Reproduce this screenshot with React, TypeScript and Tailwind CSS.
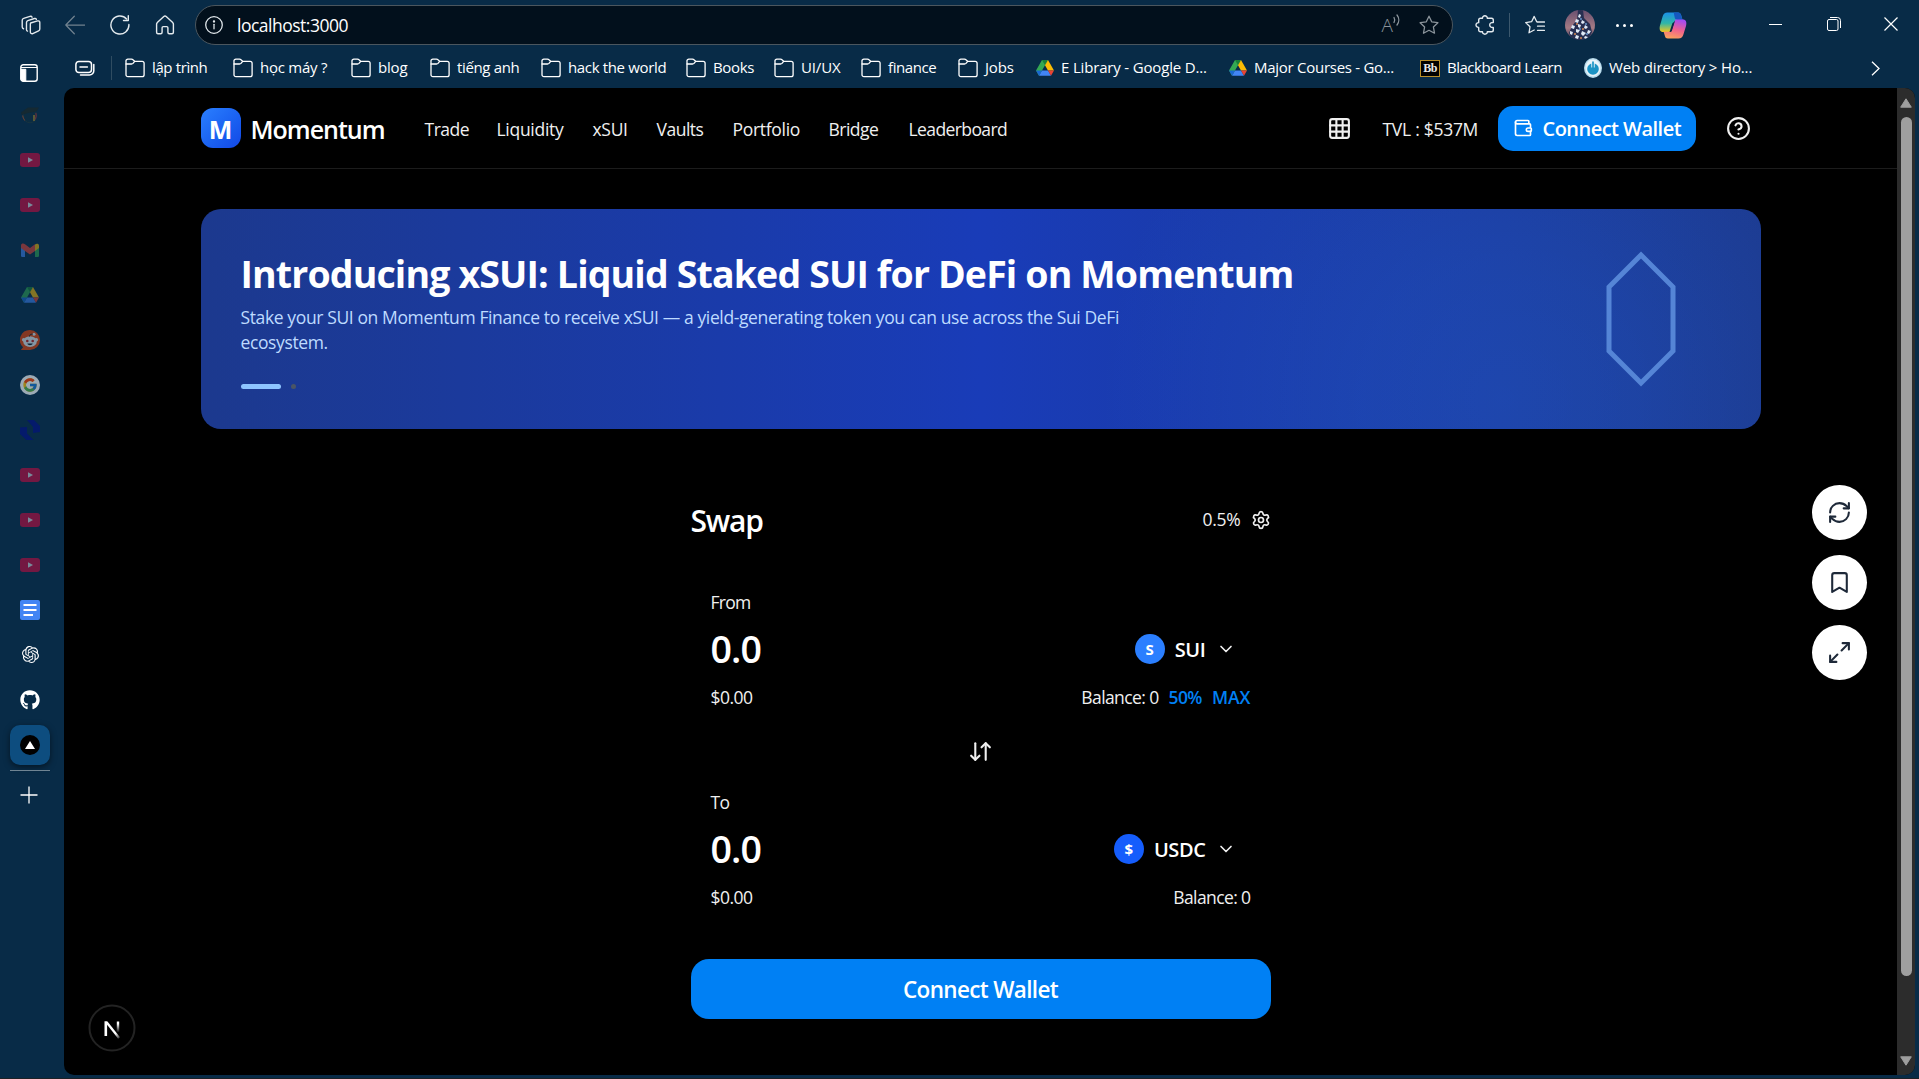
import type { ReactNode } from "react";
import {
  ArrowDownUp,
  Bookmark,
  ChevronDown,
  CircleHelp,
  Grid3x3,
  Maximize2,
  RefreshCw,
  Settings,
  Wallet,
} from "lucide-react";
import { FcGoogle } from "react-icons/fc";
import { FaGithub } from "react-icons/fa";
import { SiOpenai } from "react-icons/si";

/* ---------- browser chrome icons ---------- */

function Icon({ children, className = "size-5", sw = 1.25 }: { children: ReactNode; className?: string; sw?: number }) {
  return (
    <svg
      viewBox="0 0 20 20"
      className={`${className} shrink-0`}
      fill="none"
      stroke="currentColor"
      strokeWidth={sw}
      strokeLinecap="round"
      strokeLinejoin="round"
    >
      {children}
    </svg>
  );
}

const WorkspacesIcon = () => (
  <Icon className="size-[22px]">
    <path d="M9.6 8.2 16 6.3c1-.3 2 .4 2 1.5v5.9c0 .7-.4 1.3-1.100 1.6l-5.300 2.500c-1 .5-2.200-.2-2.200-1.400V9.700c0-.7.1-1.300.2-1.500Z" />
    <path d="M6.800 15.600c-.6-.2-.9-.7-.9-1.300V7.700c0-.8.5-1.400 1.200-1.700l6-1.900c.8-.2 1.500.1 1.800.8" />
    <path d="M3.200 13.400c-.7-.2-1.200-.8-1.200-1.500V5.700c0-.8.5-1.500 1.300-1.700l5.800-1.900c.8-.2 1.600.1 1.900.8" />
  </Icon>
);

const BackIcon = () => (
  <Icon>
    <path d="M19.500 10H.8M9.300 1.200.8 10l8.500 8.800" />
  </Icon>
);

const ReloadIcon = () => (
  <Icon sw={1.4}>
    <path d="M18.900 9.500A9 9 0 1 1 16.600 4" />
    <path d="M18.300.8v4.700h-4.800" />
  </Icon>
);

const HomeIcon = () => (
  <Icon sw={1.4}>
    <path d="M8.800 1.600a1.800 1.800 0 0 1 2.400 0l6.500 6c.5.4.7 1 .7 1.500v8.200c0 .8-.6 1.500-1.400 1.500h-2.700c-.8 0-1.400-.7-1.400-1.500v-4.500c0-.7-.5-1.200-1.200-1.200H8.300c-.7 0-1.200.5-1.200 1.200v4.500c0 .8-.6 1.500-1.400 1.500H3c-.8 0-1.400-.7-1.400-1.500V9.100c0-.6.2-1.100.7-1.500l6.500-6Z" />
  </Icon>
);

const InfoIcon = () => (
  <Icon className="size-[18px]" sw={1.4}>
    <circle cx="10" cy="10" r="9.200" />
    <path d="M10 9.200v5" />
    <circle cx="10" cy="6" r=".6" fill="currentColor" />
  </Icon>
);

const StarIcon = () => (
  <Icon sw={1.3}>
    <path d="m10 1.200 2.700 5.600 6.200.9-4.500 4.300 1.100 6.200-5.500-2.900-5.500 2.900 1.100-6.200L1.100 7.700l6.200-.9L10 1.200Z" />
  </Icon>
);

const FavoritesIcon = () => (
  <Icon sw={1.3}>
    <path d="M12 6.800h-.3L9.200 1.400 6.600 6.700l-5.900.9L5 11.800l-1 6 5.200-2.800" />
    <path d="M12.500 7h7M12.500 11.200h7M12.500 15.400h7" />
  </Icon>
);

const PuzzleIcon = () => (
  <Icon sw={1.4}>
    <path d="M5.500 3.200h2c-.1-1.500 1-2.400 2.400-2.400s2.500.9 2.400 2.400h4.200c1 0 1.800.8 1.800 1.800v2.500c-2-.3-3.600.9-3.600 2.500s1.600 2.800 3.600 2.500V15c0 1-.8 1.800-1.800 1.800h-4.200c.1 1.500-1 2.400-2.400 2.400s-2.500-.9-2.400-2.400h-2c-1 0-1.800-.8-1.800-1.800v-2.600C2.200 12.500 1 11.400 1 10s1.200-2.500 2.700-2.400V5c0-1 .8-1.800 1.800-1.800Z" />
  </Icon>
);

const FolderIcon = () => (
  <Icon sw={1.3}>
    <path d="M.9 3.200c0-1.200.9-2 2-2h3.600c.6 0 1.100.2 1.500.6L9.600 3.300h7.500c1.200 0 2 .9 2 2v11.400c0 1.200-.9 2-2 2H3c-1.200 0-2-.9-2-2V3.200Z" />
    <path d="M1 6h5.500c.6 0 1.100-.2 1.500-.6l1.700-2" />
  </Icon>
);

const TabStackIcon = () => (
  <Icon sw={1.5}>
    <rect x=".9" y="3.500" width="15.600" height="11" rx="3" />
    <path d="M5 9h7.400M18.800 6.500v6.200a4.300 4.300 0 0 1-4.300 4.300H5.500" />
  </Icon>
);

const SidebarIcon = () => (
  <svg viewBox="0 0 18 18" className="size-[18px]">
    <rect x=".8" y=".8" width="16.400" height="16.400" rx="2.500" fill="none" stroke="#fff" strokeWidth="1.400" />
    <path d="M1 3.500h16M1 5.300h4.800V17H3a2 2 0 0 1-2-2Z" fill="#fff" stroke="#fff" />
  </svg>
);

const ReadAloudIcon = () => (
  <span className="flex items-start text-[#8b949b]">
    <span className="text-[19px] leading-5 font-light">A</span>
    <svg viewBox="0 0 8 12" className="mt-[-1px] h-3 w-2" fill="none" stroke="currentColor" strokeWidth="1.300" strokeLinecap="round">
      <path d="M1 3.500a5 5 0 0 1 0 5M4 1a8 8 0 0 1 0 10" />
    </svg>
  </span>
);

const Avatar = () => (
  <svg viewBox="0 0 30 30" className="size-[30px]">
    <defs>
      <clipPath id="avatar">
        <circle cx="15" cy="15" r="15" />
      </clipPath>
      <linearGradient id="avatarBg" x1="0" y1="0" x2="0" y2="1">
        <stop offset="0" stopColor="#6a5070" />
        <stop offset=".6" stopColor="#a57b84" />
        <stop offset="1" stopColor="#3d3553" />
      </linearGradient>
    </defs>
    <g clipPath="url(#avatar)">
      <rect width="30" height="30" fill="url(#avatarBg)" />
      <path d="M13 0h5l1 8 6 6 2 8-4 8H7l-3-7 3-7 5-6Z" fill="#272f52" />
      <g fill="#dfe9f5">
        <path d="m14 4 2 1-1 3-2-1ZM11 9l3 1-1 3-3-1ZM17 10l3 2-2 2-2-1ZM7 15l3 1-1 3-3-1ZM13 14l3 1-1 3-2-1ZM20 15l3 2-2 2-2-1Z" />
        <path d="m5 21 3 1-1 3-2-1ZM11 19l4 1-2 3-2-1ZM17 21l4 2-3 3-2-2ZM23 20l3 1-2 3-2-1ZM11 25l3 1-1 3-3-1ZM20 26l3 1-2 2-2-1Z" />
      </g>
      <g fill="#d98a55">
        <circle cx="12" cy="14" r="1" /><circle cx="18" cy="19" r="1" /><circle cx="10" cy="24" r="1" /><circle cx="16" cy="28" r="1" />
      </g>
      <g fill="#6fa3dc">
        <circle cx="16" cy="9" r=".9" /><circle cx="21" cy="14" r=".9" /><circle cx="15" cy="19" r=".9" /><circle cx="22" cy="24" r=".9" />
      </g>
    </g>
  </svg>
);

const CopilotIcon = () => (
  <svg viewBox="0 0 28 27" className="h-[27px] w-7">
    <defs>
      <linearGradient id="cpA" x1="0" y1="0" x2="0" y2="1">
        <stop offset="0" stopColor="#1b8fe6" />
        <stop offset=".55" stopColor="#2fb6a8" />
        <stop offset="1" stopColor="#f2c81d" />
      </linearGradient>
      <linearGradient id="cpB" x1=".6" y1="0" x2=".3" y2="1">
        <stop offset="0" stopColor="#a44bf0" />
        <stop offset=".5" stopColor="#f0618e" />
        <stop offset="1" stopColor="#fca35b" />
      </linearGradient>
    </defs>
    <path d="M16 .5h3.200c1.600 0 2.400 1 2.800 2.300l1.600 5.200h-5.400c-2 0-3 1-3.500 2.700L11.500 20H4.200C1 20 0 17.300 1 13.500L3.600 4.400C4.400 1.700 5.800.5 8.500.5Z" fill="url(#cpA)" />
    <path d="M14.700.5H19c1.700 0 2.600 1 3 2.300l1.500 5.200h-4.800c-1.700 0-2.500-.8-2.900-2Z" fill="#1557c0" />
    <path d="M12 26.500H8.800c-1.600 0-2.400-1-2.800-2.300L4.600 19.800h5c2 0 3-1 3.500-2.700L16.400 7.500h7.400c3.200 0 4.200 2.700 3.200 6.500l-2.600 8.600c-.8 2.700-2.200 3.900-4.900 3.900Z" fill="url(#cpB)" />
    <path d="M15.500 10.200 13.600 16.500l-.7 2.300c-.3.800-.8 1.200-1.500 1.200h-.9l2.700-8.300c.4-1 1-1.500 2.300-1.500Z" fill="#082b47" />
  </svg>
);

/* ---------- site icons ---------- */

const DriveIcon = () => (
  <svg viewBox="0 0 18 16" className="h-4 w-[18px] shrink-0">
    <path d="M6 0h6L6 10.400 3 15.800 0 10.600Z" fill="#34a853" />
    <path d="M6 0h6L9 5.200Z" fill="#188038" />
    <path d="M12 0l6 10.600h-6L9 5.200Z" fill="#fbbc04" />
    <path d="M6 10.600h6L15 15.800H3Z" fill="#4285f4" />
    <path d="M0 10.600h6L3 15.800Z" fill="#1967d2" />
    <path d="M12 10.600h6L15 15.800Z" fill="#ea4335" />
  </svg>
);

const YoutubeIcon = () => (
  <svg viewBox="0 0 20 14" className="h-[14px] w-5 opacity-45">
    <rect width="20" height="14" rx="3" fill="#f5033d" />
    <path d="M8 4.200v5.600L13 7Z" fill="#fff" />
  </svg>
);

const GmailIcon = () => (
  <svg viewBox="0 0 18 14" className="h-[14px] w-[18px] opacity-50">
    <path d="M0 3h4v11H1.200A1.200 1.200 0 0 1 0 12.800Z" fill="#4285f4" />
    <path d="M14 3h4v9.800a1.200 1.200 0 0 1-1.200 1.200H14Z" fill="#34a853" />
    <path d="M14 1.500C15.500 0 18 .5 18 2.500V5l-4 3Z" fill="#fbbc04" />
    <path d="M0 5V2.500C0 .5 2.500 0 4 1.300L9 5l5-3.700V8L9 11.500 4 8Z" fill="#ea4335" />
  </svg>
);

const RedditIcon = () => (
  <svg viewBox="0 0 20 20" className="size-5 opacity-50">
    <path d="M10 0a10 10 0 1 1 0 20H.8l2.300-2.700A10 10 0 0 1 10 0Z" fill="#ff4500" />
    <circle cx="3.700" cy="9.800" r="1.800" fill="#fff" />
    <circle cx="16.300" cy="9.800" r="1.800" fill="#fff" />
    <ellipse cx="10" cy="11.600" rx="6.800" ry="5.300" fill="#fff" />
    <circle cx="14" cy="4.300" r="1.500" fill="#fff" />
    <path d="M9.500 6.500c0-1.600 1-2.500 3.200-2.300" stroke="#222" fill="none" />
    <circle cx="7.300" cy="11" r="1.300" fill="#d6231a" />
    <circle cx="12.700" cy="11" r="1.300" fill="#d6231a" />
    <path d="M7.300 13.500h5.400c-.4 2.200-5 2.200-5.400 0Z" fill="#142029" />
  </svg>
);

const GoogleIcon = () => (
  <span className="flex size-5 items-center justify-center rounded-full bg-white opacity-60">
    <FcGoogle className="size-4" />
  </span>
);

const SwirlIcon = () => (
  <svg viewBox="0 0 20 20" className="size-5" fill="#041a6b">
    <path d="M7 0H14l6 6v6l-7 1V7Z" />
    <path d="M13.500 20H6.500L0 14V7.500L7 7v6.500Z" />
  </svg>
);

const GradIcon = () => (
  <svg viewBox="0 0 20 18" className="h-[18px] w-5">
    <circle cx="10" cy="10" r="6.800" fill="#0b2c42" stroke="#173340" />
    <path d="M1 6.500 8 1.500h11l-2.500 4-8.500 1.500-6.500 2Z" fill="#152932" />
    <path d="M2.600 9.500c.3 2 1 3.500 2.200 5" stroke="#5e4038" strokeWidth="1.200" fill="none" />
    <path d="M14 9v6" stroke="#7a6d33" strokeWidth="1.400" />
    <path d="M15.800 7c.8 2.200.6 4.500-.6 6.500" stroke="#5f2f3e" strokeWidth="1.300" fill="none" />
  </svg>
);

const DocsIcon = () => (
  <svg viewBox="0 0 20 20" className="size-5">
    <rect width="20" height="20" rx="2" fill="#4285f4" />
    <path d="M3.500 5h13M3.500 10h13M3.500 15h9.500" stroke="#fff" strokeWidth="2.200" />
  </svg>
);

const BlackboardIcon = () => (
  <span className="flex h-[17px] w-5 shrink-0 items-center justify-center border border-[#b98f2a] bg-black font-['Liberation_Serif',serif] text-[12px] leading-none font-bold text-[#e8e8e8]">
    Bb
  </span>
);

const WebDirIcon = () => (
  <svg viewBox="0 0 18 20" className="h-5 w-[18px] shrink-0">
    <ellipse cx="9" cy="10" rx="9" ry="10" fill="#b9dcec" />
    <ellipse cx="9" cy="10" rx="7.600" ry="8.500" fill="#e8f4fa" />
    <circle cx="9" cy="11" r="5.800" fill="#1b93c4" />
    <path d="M9 2.500v7" stroke="#e8f4fa" strokeWidth="3.400" />
    <path d="M9 3.500V11" stroke="#1b93c4" strokeWidth="1.700" />
  </svg>
);

/* ---------- browser chrome ---------- */

function Toolbar() {
  return (
    <div className="flex h-[50px] items-center text-[#e4eaee]">
      <div className="flex w-[61px] justify-center"><WorkspacesIcon /></div>
      <div className="flex w-7 justify-center text-[#71828f]"><BackIcon /></div>
      <div className="ml-[21px] flex w-5"><ReloadIcon /></div>
      <div className="ml-[25px] flex w-5"><HomeIcon /></div>
      <div className="ml-[20px] flex h-10 w-[1258px] items-center rounded-full border border-[#4b565e] bg-[#02101c] pr-[13px] pl-[9px]">
        <InfoIcon />
        <span className="ml-[14px] text-[17.5px] tracking-[-0.5px] text-white">localhost:3000</span>
        <div className="ml-auto flex items-center gap-[18px] text-[#8b949b]">
          <ReadAloudIcon />
          <StarIcon />
        </div>
      </div>
      <div className="ml-[22px] flex w-5"><PuzzleIcon /></div>
      <div className="ml-[14px] h-6 w-px bg-[#3c586d]" />
      <div className="ml-[15px] flex w-5"><FavoritesIcon /></div>
      <div className="ml-[20px] flex w-[30px]"><Avatar /></div>
      <div className="ml-[21px] flex w-[17px] justify-between">
        <span className="size-[3px] rounded-full bg-white" />
        <span className="size-[3px] rounded-full bg-white" />
        <span className="size-[3px] rounded-full bg-white" />
      </div>
      <div className="ml-[26px] flex w-7"><CopilotIcon /></div>
      <div className="ml-[82px] h-px w-[13px] -translate-y-px bg-white" />
      <div className="ml-[45px] flex -translate-y-px">
        <svg viewBox="0 0 14 14" className="size-[14px]" fill="none" stroke="#fff">
          <rect x=".5" y="2.500" width="10.500" height="11" rx="1.500" />
          <path d="M3 .5h7.500a3 3 0 0 1 3 3V11" />
        </svg>
      </div>
      <div className="ml-[43px] flex -translate-y-px">
        <svg viewBox="0 0 14 14" className="size-[14px]" stroke="#fff" strokeWidth="1.200">
          <path d="m.5.5 13 13M13.500.5l-13 13" />
        </svg>
      </div>
    </div>
  );
}

function Mark({ icon, text, className }: { icon: ReactNode; text: string; className: string }) {
  return (
    <div className={`flex shrink-0 items-center gap-[7px] whitespace-nowrap ${className}`}>
      {icon}
      <span className="pb-[2px]">{text}</span>
    </div>
  );
}

function Bookmarks() {
  return (
    <div className="flex h-[38px] items-center pb-[2px] text-[15px] text-white">
      <div className="flex w-[64px] items-center pt-[10px] pl-5"><SidebarIcon /></div>
      <div className="ml-[11px] flex w-9 pb-px"><TabStackIcon /></div>
      <div className="mr-[13px] h-6 w-px bg-[#2f4c61]" />
      <Mark icon={<FolderIcon />} text="lập trình" className="w-[108px] tracking-[-0.38px]" />
      <Mark icon={<FolderIcon />} text="học máy ?" className="w-[118px] tracking-[-0.25px]" />
      <Mark icon={<FolderIcon />} text="blog" className="w-[79px] tracking-[-0.2px]" />
      <Mark icon={<FolderIcon />} text="tiếng anh" className="w-[111px] tracking-[-0.35px]" />
      <Mark icon={<FolderIcon />} text="hack the world" className="w-[145px] tracking-[-0.35px]" />
      <Mark icon={<FolderIcon />} text="Books" className="w-[88px] tracking-[-0.35px]" />
      <Mark icon={<FolderIcon />} text="UI/UX" className="w-[87px] tracking-[-0.15px]" />
      <Mark icon={<FolderIcon />} text="finance" className="w-[97px] tracking-[-0.4px]" />
      <Mark icon={<FolderIcon />} text="Jobs" className="w-[78px] tracking-[-0.2px]" />
      <Mark icon={<DriveIcon />} text="E Library - Google D..." className="w-[193px] tracking-[-0.17px]" />
      <Mark icon={<DriveIcon />} text="Major Courses - Go..." className="w-[191px] tracking-[-0.27px]" />
      <Mark icon={<BlackboardIcon />} text="Blackboard Learn" className="w-[164px] tracking-[-0.48px]" />
      <Mark icon={<WebDirIcon />} text="Web directory > Ho..." className="w-[287px] tracking-[-0.15px]" />
      <svg viewBox="0 0 9 15" className="h-[15px] w-[9px]" fill="none" stroke="#fff" strokeWidth="1.300">
        <path d="m1 .8 7 6.700-7 6.700" />
      </svg>
    </div>
  );
}

const TABS: ReactNode[] = [
  <GradIcon />,
  <YoutubeIcon />,
  <YoutubeIcon />,
  <GmailIcon />,
  <span className="opacity-50"><DriveIcon /></span>,
  <RedditIcon />,
  <GoogleIcon />,
  <SwirlIcon />,
  <YoutubeIcon />,
  <YoutubeIcon />,
  <YoutubeIcon />,
  <DocsIcon />,
  <SiOpenai className="size-[17px] text-white" />,
  <FaGithub className="size-5 text-white" />,
];

function TabRail() {
  return (
    <div className="flex w-[60px] shrink-0 flex-col items-center pt-1">
      {TABS.map((icon, i) => (
        <div key={i} className="flex h-[45px] items-center justify-center">{icon}</div>
      ))}
      <div className="mt-[3px] flex size-10 items-center justify-center rounded-[10px] bg-[#0d4d7f] shadow-[0_2px_6px_rgba(0,0,0,0.5)]">
        <span className="flex size-5 items-center justify-center rounded-full bg-black">
          <svg viewBox="0 0 10 8" className="h-2 w-[10px]"><path d="M5 0l5 8H0Z" fill="#fff" /></svg>
        </span>
      </div>
      <div className="mt-[5px] h-px w-10 bg-[#6f8493]" />
      <svg viewBox="0 0 18 18" className="mt-[15px] mr-[2px] size-[18px]" stroke="#fff" strokeWidth="1.300">
        <path d="M9 .5v17M.5 9h17" />
      </svg>
    </div>
  );
}

/* ---------- page ---------- */

function Header() {
  return (
    <header className="h-[81px] border-b border-[#1c1c1c]">
      <div className="mx-auto flex h-full w-[1560px] items-center">
        <div className="flex size-10 items-center justify-center rounded-[12px] bg-linear-to-br from-[#2b7fff] to-[#1447e6]">
          <span className="pt-[2px] text-[25px] leading-none font-bold text-white">M</span>
        </div>
        <span className="ml-[10px] w-[174px] pt-[4px] text-[25px] font-semibold tracking-[-1px] text-white">Momentum</span>
        <nav className="flex pt-[3px] text-[17.5px] tracking-[-0.5px] text-[#f0f0f0]">
          <a className="w-[72px]">Trade</a>
          <a className="w-[96px] tracking-[-0.28px]">Liquidity</a>
          <a className="w-[64px] tracking-[-0.3px]">xSUI</a>
          <a className="w-[76px]">Vaults</a>
          <a className="w-[96px] tracking-[-0.3px]">Portfolio</a>
          <a className="w-[80px]">Bridge</a>
          <a className="tracking-[-0.6px]">Leaderboard</a>
        </nav>
        <div className="ml-auto flex items-center">
          <Grid3x3 className="size-[25px] text-[#f0f0f0]" />
          <span className="ml-[31px] w-[115px] pt-[3px] text-[17.5px] tracking-[-0.28px] text-[#f0f0f0]">TVL : $537M</span>
          <button className="flex h-[45px] w-[198px] items-center rounded-[15px] bg-[#0080f4] pl-[15px] text-white">
            <Wallet className="size-5" />
            <span className="ml-[10px] pt-px text-[20px] font-semibold tracking-[-0.53px]">Connect Wallet</span>
          </button>
          <CircleHelp className="mr-[10px] ml-[30px] size-[25px] text-[#f0f0f0]" />
        </div>
      </div>
    </header>
  );
}

function Banner() {
  return (
    <section className="flex h-[220px] w-[1560px] justify-between rounded-[20px] bg-[radial-gradient(circle_400px_at_1300px_190px,rgba(43,127,255,0.18),rgba(43,127,255,0.14)_35%,rgba(43,127,255,0)),linear-gradient(90deg,#1c398e,#193cb8_50%,#1c398e)] px-10 pt-10">
      <div>
        <h1 className="text-[37.5px] leading-[50px] font-bold tracking-[-0.86px] text-white">
          Introducing xSUI: Liquid Staked SUI for DeFi on Momentum
        </h1>
        <p className="mt-[6px] w-[900px] text-[17.5px] leading-[25px] tracking-[-0.38px] text-[#bedbff]">
          Stake your SUI on Momentum Finance to receive xSUI — a yield-generating token you can use across the Sui DeFi
          <br />
          ecosystem.
        </p>
        <div className="mt-[29px] flex gap-[10px]">
          <div className="h-[5px] w-10 rounded-full bg-[#8ec5ff]" />
          <div className="size-[5px] rounded-full bg-[#4a5565]" />
        </div>
      </div>
      <svg viewBox="0 0 160 160" className="-mt-[10px] size-[160px]" fill="none" stroke="#5585d6" strokeWidth="5">
        <path d="M80 16 112 48v64L80 144 48 112v-64Z" />
      </svg>
    </section>
  );
}

function TokenBox({
  label,
  symbol,
  token,
  badge,
  children,
}: {
  label: string;
  symbol: string;
  token: string;
  badge: string;
  children: ReactNode;
}) {
  return (
    <div className="h-[160px] p-5 text-[17.5px] leading-[25px] text-[#f0f0f0]">
      <div className="tracking-[-0.7px]">{label}</div>
      <div className="mt-[11px] flex h-[45px] items-center justify-between">
        <span className="text-[37.5px] leading-[45px] font-semibold tracking-[-0.9px] text-white">0.0</span>
        <div className="mr-[15px] flex items-center">
          <span className={`flex size-[30px] items-center justify-center rounded-full pt-px text-[15px] leading-none font-bold text-white ${badge}`}>
            {symbol}
          </span>
          <span className="ml-[10px] pt-px text-[20px] font-semibold tracking-[-0.4px] text-white">{token}</span>
          <ChevronDown className="ml-[10px] size-5" />
        </div>
      </div>
      <div className="mt-[14px] flex justify-between">
        <span className="tracking-[-0.5px]">$0.00</span>
        <div className="flex">{children}</div>
      </div>
    </div>
  );
}

function SwapPanel() {
  return (
    <section className="mt-[68px] w-[580px]">
      <div className="flex h-[45px] items-center justify-between">
        <h2 className="pt-px text-[30px] font-semibold tracking-[-1.2px] text-white">Swap</h2>
        <div className="flex items-center gap-[10px] text-[17.5px] tracking-[-0.25px] text-[#f0f0f0]">
          <span>0.5%</span>
          <Settings className="size-5" />
        </div>
      </div>
      <div className="h-7" />
      <TokenBox label="From" symbol="S" token="SUI" badge="bg-[#2b7fff]">
        <span className="tracking-[-0.6px]">Balance: 0</span>
        <span className="ml-[10px] font-semibold tracking-[-0.6px] text-[#0080f4]">50%</span>
        <span className="ml-[10px] font-semibold text-[#0080f4]">MAX</span>
      </TokenBox>
      <div className="flex h-10 items-center justify-center pt-[3px] text-[#f0f0f0]">
        <ArrowDownUp className="size-[25px]" />
      </div>
      <TokenBox label="To" symbol="$" token="USDC" badge="bg-[#155dfc]">
        <span className="tracking-[-0.6px]">Balance: 0</span>
      </TokenBox>
      <button className="mt-[29px] flex h-[60px] w-full items-center justify-center rounded-[18px] bg-[#0080f4] pt-px text-[22.5px] font-semibold tracking-[-0.65px] text-white">
        Connect Wallet
      </button>
    </section>
  );
}

function FloatingActions() {
  return (
    <div className="absolute top-[397px] left-[1748px] flex flex-col gap-[15px] text-[#1e2939]">
      <button className="flex size-[55px] items-center justify-center rounded-full bg-white"><RefreshCw className="size-[25px]" /></button>
      <button className="flex size-[55px] items-center justify-center rounded-full bg-white"><Bookmark className="size-[25px]" /></button>
      <button className="flex size-[55px] items-center justify-center rounded-full bg-white"><Maximize2 className="size-[25px]" /></button>
    </div>
  );
}

function DevBadge() {
  return (
    <svg viewBox="0 0 48 48" className="absolute top-[915.5px] left-[23.5px] size-12">
      <defs>
        <linearGradient id="diag" x1="0" y1="0" x2="1" y2="1">
          <stop offset=".7" stopColor="#fff" />
          <stop offset="1" stopColor="#fff" stopOpacity=".1" />
        </linearGradient>
        <linearGradient id="stem" x1="0" y1="0" x2="0" y2="1">
          <stop offset=".2" stopColor="#fff" />
          <stop offset="1" stopColor="#fff" stopOpacity="0" />
        </linearGradient>
      </defs>
      <circle cx="24" cy="24" r="22.500" fill="#000" stroke="#232323" strokeWidth="2" />
      <rect x="16.500" y="17.500" width="2.600" height="14.500" fill="#fff" />
      <path d="M16.500 17.500h3L32 33.300l-1.800 1.400Z" fill="url(#diag)" />
      <rect x="28.800" y="17.500" width="2.400" height="11" fill="url(#stem)" />
    </svg>
  );
}

function Scrollbar() {
  return (
    <div className="flex w-[18px] shrink-0 flex-col items-center bg-[#2c2c2c] pt-[10px] pb-[9px]">
      <svg viewBox="0 0 12 10" className="h-[10px] w-3"><path d="M6 .8 11.300 9.200H.7Z" fill="#9f9f9f" stroke="#9f9f9f" strokeLinejoin="round" /></svg>
      <div className="mt-[9px] h-[859px] w-[11px] rounded-full bg-[#9f9f9f]" />
      <svg viewBox="0 0 12 10" className="mt-auto h-[10px] w-3"><path d="M6 9.200 11.300.8H.7Z" fill="#9f9f9f" stroke="#9f9f9f" strokeLinejoin="round" /></svg>
    </div>
  );
}

export default function App() {
  return (
    <div className="flex h-[1079px] w-[1919px] flex-col overflow-hidden border-b border-[#1c2126] bg-[#082b47] font-['Open_Sans','Noto_Sans',sans-serif]">
      <Toolbar />
      <Bookmarks />
      <div className="flex h-[987px]">
        <TabRail />
        <div className="relative ml-1 flex w-[1851px] overflow-hidden rounded-[10px] bg-black">
          <div className="w-[1833px]">
            <Header />
            <main className="flex flex-col items-center pt-10">
              <Banner />
              <SwapPanel />
            </main>
          </div>
          <Scrollbar />
          <FloatingActions />
          <DevBadge />
        </div>
      </div>
    </div>
  );
}
